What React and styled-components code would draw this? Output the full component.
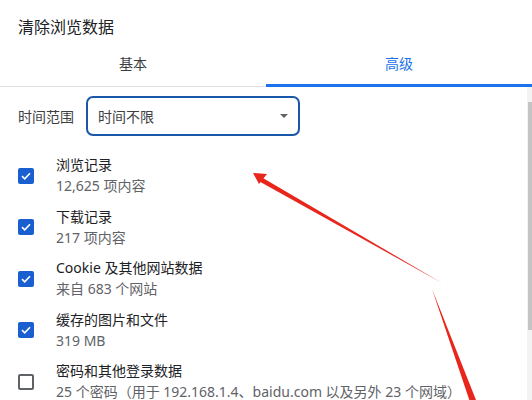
import React from 'react'
import styled, { createGlobalStyle } from 'styled-components'

const GlobalStyle = createGlobalStyle`
  body {
    margin: 0;
    background: #fff;
    font-family: "Segoe UI", "Noto Sans", "Noto Sans CJK SC", sans-serif;
    color: #202124;
  }
`

const items = [
  { title: '浏览记录', sub: '12,625 项内容', checked: true },
  { title: '下载记录', sub: '217 项内容', checked: true },
  { title: 'Cookie 及其他网站数据', sub: '来自 683 个网站', checked: true },
  { title: '缓存的图片和文件', sub: '319 MB', checked: true },
  {
    title: '密码和其他登录数据',
    sub: '25 个密码（用于 192.168.1.4、baidu.com 以及另外 23 个网域）',
    checked: false,
  },
]

const Dialog = styled.div`
  position: relative;
  width: 532px;
  height: 400px;
  overflow: hidden;
  background: #fff;
`

const Title = styled.h2`
  margin: 0;
  padding: 16px 18px 0;
  height: 28px;
  font-size: 16px;
  font-weight: 400;
  line-height: 22px;
  color: #202124;
`

const Tabs = styled.div`
  display: flex;
  height: 43px;
`

const Tab = styled.div`
  flex: 1;
  display: flex;
  align-items: center;
  justify-content: center;
  font-size: 14px;
  color: ${p => (p.active ? '#1a73e8' : '#3c4043')};
  border-bottom: ${p => (p.active ? '3px solid #1a73e8' : '1px solid #e3e3e3')};
  padding-bottom: ${p => (p.active ? '3px' : '5px')};
  box-sizing: border-box;
`

const Body = styled.div`
  display: flex;
`

const Content = styled.div`
  flex: 1;
  padding: 9px 0 0 18px;
`

const Scrollbar = styled.div`
  width: 5px;
  height: 320px;
  background: #f3f3f3;
  display: flex;
  flex-direction: column;
  padding-top: 15px;
  box-sizing: border-box;
`

const Thumb = styled.div`
  height: 228px;
  background: #c4c4c4;
  margin-left: 1px;
`

const RangeRow = styled.div`
  display: flex;
  align-items: center;
  gap: 12px;
  font-size: 14px;
  color: #3c4043;
`

const Select = styled.div`
  width: 214px;
  height: 40px;
  box-sizing: border-box;
  border: 2px solid #1b57a8;
  border-radius: 7px;
  display: flex;
  align-items: center;
  justify-content: space-between;
  padding: 0 10px;
  font-size: 14px;
  color: #3c4043;
`

const Caret = styled.span`
  width: 0;
  height: 0;
  border-left: 4px solid transparent;
  border-right: 4px solid transparent;
  border-top: 4px solid #5f6368;
`

const List = styled.div`
  margin-top: 14px;
  display: flex;
  flex-direction: column;
`

const Item = styled.div`
  display: flex;
  align-items: center;
  height: 51.5px;
`

const Box = styled.span`
  width: 16px;
  height: 16px;
  box-sizing: border-box;
  border-radius: 2px;
  margin-right: 22px;
  display: flex;
  align-items: center;
  justify-content: center;
  background: ${p => (p.checked ? '#1a5fd0' : '#fff')};
  border: ${p => (p.checked ? 'none' : '2px solid #5f6368')};
`

const Texts = styled.div`
  display: flex;
  flex-direction: column;
  gap: 3px;
`

const ItemTitle = styled.div`
  font-size: 14px;
  line-height: 18px;
  color: #202124;
`

const ItemSub = styled.div`
  font-size: 14px;
  line-height: 18px;
  color: #5f6368;
  white-space: nowrap;
`

const Arrows = styled.svg`
  position: absolute;
  left: 0;
  top: 0;
  pointer-events: none;
`

const Check = () => (
  <svg width="10" height="8" viewBox="0 0 10 8">
    <path d="M1 4.2 L3.7 6.8 L9 1.2" fill="none" stroke="#fff" strokeWidth="1.6" />
  </svg>
)

export default function App() {
  return (
    <Dialog>
      <GlobalStyle />
      <Title>清除浏览数据</Title>
      <Tabs>
        <Tab>基本</Tab>
        <Tab active>高级</Tab>
      </Tabs>
      <Body>
        <Content>
          <RangeRow>
            时间范围
            <Select>
              时间不限
              <Caret />
            </Select>
          </RangeRow>
          <List>
            {items.map(it => (
              <Item key={it.title}>
                <Box checked={it.checked}>{it.checked && <Check />}</Box>
                <Texts>
                  <ItemTitle>{it.title}</ItemTitle>
                  <ItemSub>{it.sub}</ItemSub>
                </Texts>
              </Item>
            ))}
          </List>
        </Content>
        <Scrollbar>
          <Thumb />
        </Scrollbar>
      </Body>
      <Arrows width="532" height="400" viewBox="0 0 532 400">
        <polygon points="442,283 262,177.5 259.5,181.5" fill="#e8261c" />
        <polygon points="253,173 267,174 259,184" fill="#e8261c" />
        <polygon points="432,289 476,400 470,402" fill="#e8261c" />
      </Arrows>
    </Dialog>
  )
}
